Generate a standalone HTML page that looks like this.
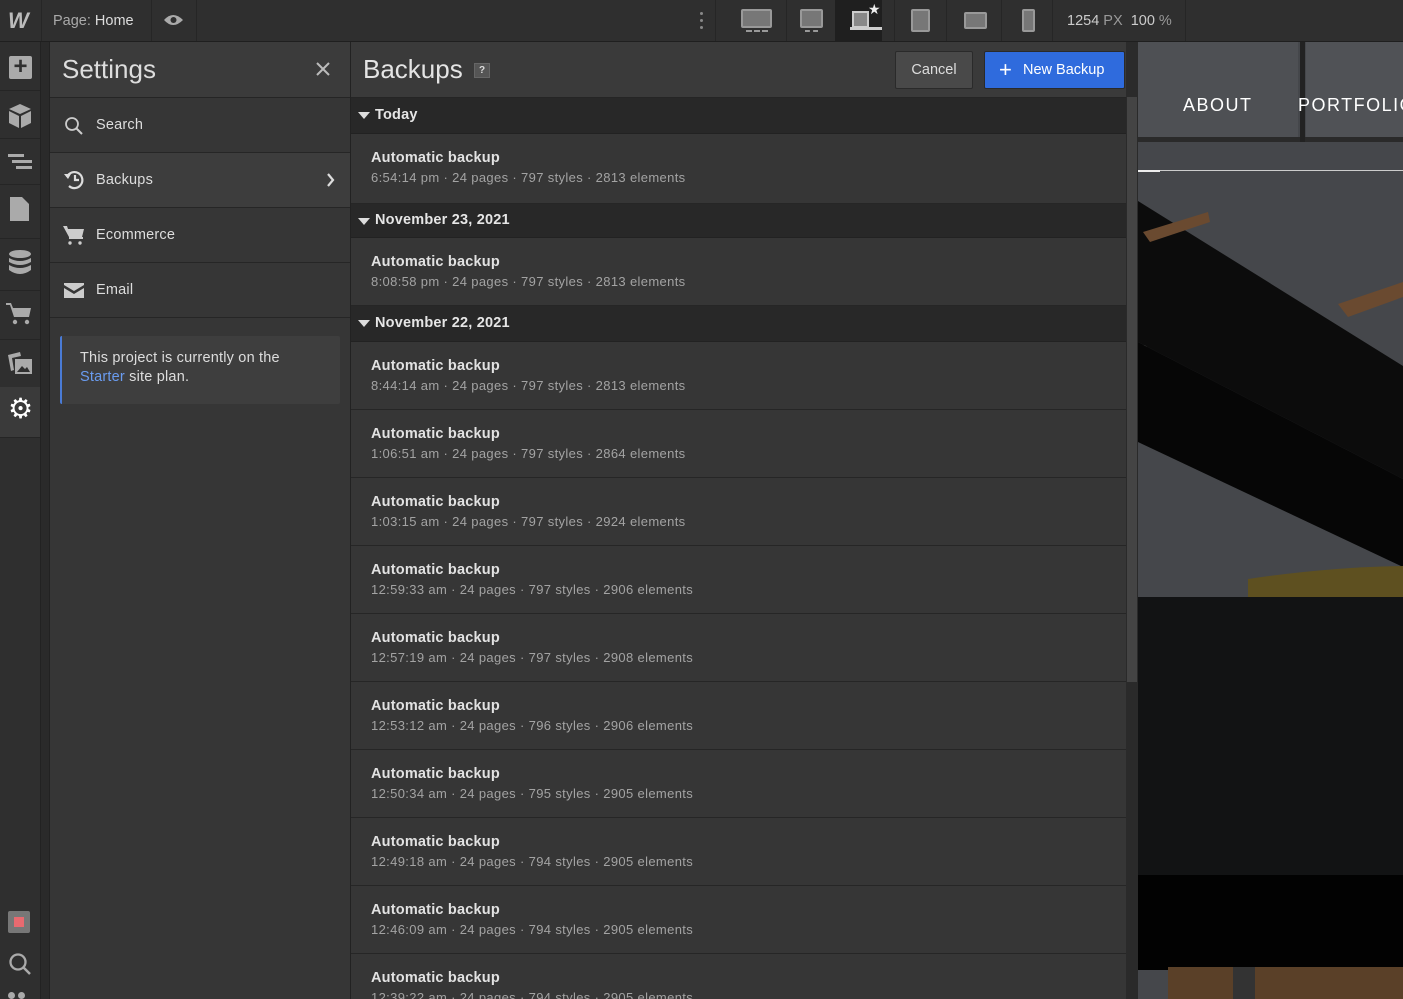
<!DOCTYPE html>
<html><head><style>
*{box-sizing:border-box;margin:0;padding:0}
html,body{width:1403px;height:999px;overflow:hidden}
body{background:#2b2b2b;font-family:"Liberation Sans",sans-serif;position:relative;color:#ddd}
.abs{position:absolute}
#top{left:0;top:0;width:1403px;height:42px;background:#2f2f2f;border-bottom:1px solid #1f1f1f}
.tsep{position:absolute;top:0;width:1px;height:41px;background:#262626}
#rail{left:0;top:42px;width:41px;height:957px;background:#2f2f2f;border-right:1px solid #222}
#gap{left:41px;top:42px;width:8px;height:957px;background:#2a2a2a}
#set{left:49px;top:42px;width:302px;height:957px;background:#363636;border-right:1px solid #222;border-left:1px solid #222}
.sh{height:56px;background:#3b3b3b;border-bottom:1px solid #252525;position:relative}
.mi{height:55px;border-bottom:1px solid #262626;position:relative;font-size:14.5px;color:#ddd;padding-left:46px;line-height:54px;letter-spacing:.2px}
#bk{left:351px;top:42px;width:775px;height:957px;background:#363636}
.gh{height:36px;background:#282828;border-bottom:1px solid #222;font-size:14.5px;font-weight:bold;color:#e6e6e6;line-height:35px;padding-left:24px;position:relative;letter-spacing:.2px}
.gh:before{content:"";position:absolute;left:7px;top:14px;border-left:6px solid transparent;border-right:6px solid transparent;border-top:7px solid #ddd}
.it{height:68px;border-bottom:1px solid #262626;padding:14px 0 0 20px}
.it b{display:block;font-size:14.5px;color:#e2e2e2;line-height:20px;letter-spacing:.2px}
.it span{display:block;font-size:13px;color:#a3a3a3;line-height:20px;letter-spacing:.35px}
#sb{left:1126px;top:97px;width:12px;height:902px;background:#2a2a2a}
#photo{left:1138px;top:42px;width:265px;height:957px;background:#4a4c50;overflow:hidden}
</style></head><body>
<div id="top" class="abs">
 <div class="abs" style="left:8px;top:8px;font-size:22px;font-weight:bold;font-style:italic;color:#bbb">W</div>
 <div class="tsep" style="left:41px"></div>
 <div class="abs" style="left:53px;top:13px;font-size:14.5px;color:#aaa">Page: <span style="color:#ddd">Home</span></div>
 <div class="tsep" style="left:151px"></div>
 <svg class="abs" style="left:163px;top:12px" width="21" height="16" viewBox="0 0 21 16"><path d="M1 8Q10 -2 20 8Q10 18 1 8Z" fill="#aaa"/><circle cx="10.5" cy="8" r="3" fill="#2f2f2f"/></svg>
 <div class="tsep" style="left:196px"></div>
 <div class="abs" style="left:700px;top:12px;width:4px;"><div style="width:3px;height:3px;background:#888;margin-bottom:4px;border-radius:2px"></div><div style="width:3px;height:3px;background:#888;margin-bottom:4px;border-radius:2px"></div><div style="width:3px;height:3px;background:#888;border-radius:2px"></div></div>
 <div class="tsep" style="left:715px"></div>
 <div class="abs" style="left:741px;top:9px;width:31px;height:19px;border:2px solid #999;background:#777;border-radius:2px"></div>
 <div class="abs" style="left:746px;top:30px;width:22px;height:2px;border-top:2px dashed #999"></div>
 <div class="tsep" style="left:786px"></div>
 <div class="abs" style="left:800px;top:9px;width:23px;height:19px;border:2px solid #999;background:#777;border-radius:2px"></div><div class="abs" style="left:805px;top:30px;width:13px;height:2px;border-top:2px dashed #999"></div>
 <div class="abs" style="left:835px;top:0;width:47px;height:41px;background:#1f1f1f"></div>
 <div class="abs" style="left:852px;top:11px;width:17px;height:17px;border:2px solid #ccc;background:#888"></div><div class="abs" style="left:850px;top:27px;width:32px;height:3px;background:#ccc"></div>
 <div class="abs" style="left:868px;top:1px;font-size:14px;color:#eee">★</div>
 <div class="tsep" style="left:894px"></div>
 <div class="abs" style="left:911px;top:9px;width:19px;height:23px;border:2px solid #999;background:#777;border-radius:2px"></div>
 <div class="tsep" style="left:946px"></div>
 <div class="abs" style="left:964px;top:12px;width:23px;height:17px;border:2px solid #999;background:#777;border-radius:2px"></div>
 <div class="tsep" style="left:1001px"></div>
 <div class="abs" style="left:1022px;top:9px;width:13px;height:23px;border:2px solid #999;background:#777;border-radius:2px"></div>
 <div class="tsep" style="left:1052px"></div>
 <div class="abs" style="left:1067px;top:13px;font-size:14.5px;color:#ccc">1254 <span style="color:#999">PX</span>&nbsp; 100 <span style="color:#999">%</span></div>
 <div class="tsep" style="left:1185px"></div>
</div>
<div id="rail" class="abs">
 <div class="abs" style="left:9px;top:14px;width:23px;height:23px;background:#aaa;color:#2f2f2f;font-size:24px;line-height:22px;text-align:center;font-weight:bold;border-radius:2px">+</div>
 <div class="abs" style="left:0;top:48px;width:40px;height:1px;background:#252525"></div>
 <svg class="abs" style="left:8px;top:61px" width="24" height="26" viewBox="0 0 24 26"><path d="M12 1L23 6L12 11L1 6Z" fill="#aaa"/><path d="M1 8L11 13V25L1 20Z M13 13L23 8V20L13 25Z" fill="#aaa"/></svg>
 <div class="abs" style="left:0;top:96px;width:40px;height:1px;background:#252525"></div>
 <div class="abs" style="left:8px;top:112px;width:16px;height:3px;background:#aaa"></div><div class="abs" style="left:12px;top:118px;width:20px;height:3px;background:#aaa"></div><div class="abs" style="left:16px;top:124px;width:16px;height:3px;background:#aaa"></div>
 <div class="abs" style="left:0;top:142px;width:40px;height:1px;background:#252525"></div>
 <svg class="abs" style="left:10px;top:155px" width="19" height="24" viewBox="0 0 19 24"><path d="M0 0H12L19 7V24H0Z" fill="#aaa"/></svg>
 <div class="abs" style="left:0;top:196px;width:40px;height:1px;background:#252525"></div>
 <svg class="abs" style="left:8px;top:208px" width="24" height="26" viewBox="0 0 24 26"><ellipse cx="12" cy="4" rx="11" ry="4" fill="#aaa"/><path d="M1 8Q12 14 23 8V12Q12 18 1 12Z M1 15Q12 21 23 15V20Q12 28 1 20Z" fill="#aaa"/></svg>
 <div class="abs" style="left:0;top:248px;width:40px;height:1px;background:#252525"></div>
 <svg class="abs" style="left:6px;top:260px" width="26" height="24" viewBox="0 0 26 24"><path d="M0 1H5L7 6H25L23 15H8L4 3H0Z" fill="#aaa"/><circle cx="9" cy="20" r="2.2" fill="#aaa"/><circle cx="21" cy="20" r="2.2" fill="#aaa"/></svg>
 <div class="abs" style="left:0;top:297px;width:40px;height:1px;background:#252525"></div>
 <svg class="abs" style="left:7px;top:309px" width="26" height="24" viewBox="0 0 26 24"><path d="M1 4L13 1L14 5L5 7L7 19L4 20Z" fill="#aaa"/><rect x="8" y="8" width="17" height="15" fill="#aaa"/><path d="M10 21L15 15L18 18L20 16L23 21Z" fill="#2f2f2f"/></svg>
 <div class="abs" style="left:0;top:345px;width:40px;height:50px;background:#3a3a3a"></div>
 <div class="abs" style="left:8px;top:352px;font-size:28px;color:#fff;line-height:30px">⚙</div>
 <div class="abs" style="left:0;top:395px;width:40px;height:1px;background:#252525"></div>
 <div class="abs" style="left:8px;top:869px;width:22px;height:22px;background:#777;border-radius:2px"></div><div class="abs" style="left:14px;top:875px;width:10px;height:10px;background:#e86a70"></div>
 <svg class="abs" style="left:8px;top:910px" width="24" height="24" viewBox="0 0 24 24"><circle cx="10" cy="10" r="7.5" fill="none" stroke="#aaa" stroke-width="2.3"/><path d="M15.5 15.5L22 22" stroke="#aaa" stroke-width="2.5"/></svg>
 <div class="abs" style="left:8px;top:950px;width:7px;height:7px;background:#aaa;border-radius:4px"></div><div class="abs" style="left:18px;top:950px;width:7px;height:7px;background:#aaa;border-radius:4px"></div>
</div>
<div id="gap" class="abs"></div>
<div id="set" class="abs">
 <div class="sh"><div class="abs" style="left:12px;top:12px;font-size:26px;color:#ddd">Settings</div><svg class="abs" style="left:266px;top:20px" width="14" height="14" viewBox="0 0 14 14"><path d="M1 1L13 13M13 1L1 13" stroke="#bbb" stroke-width="2"/></svg></div>
 <div class="mi"><svg class="abs" style="left:14px;top:18px" width="20" height="20" viewBox="0 0 20 20"><circle cx="8" cy="8" r="6" fill="none" stroke="#ccc" stroke-width="1.8"/><path d="M12.5 12.5L18 18" stroke="#ccc" stroke-width="2"/></svg>Search</div>
 <div class="mi" style="background:#3d3d3d"><svg class="abs" style="left:13px;top:16px" width="22" height="22" viewBox="0 0 22 22"><path d="M4 8A8 8 0 1 1 6 17" fill="none" stroke="#ddd" stroke-width="2.2"/><path d="M1 5L5 10L8 5Z" fill="#ddd"/><path d="M12 6V11H16" fill="none" stroke="#ddd" stroke-width="2.2"/></svg>Backups<svg class="abs" style="left:276px;top:20px" width="9" height="14" viewBox="0 0 9 14"><path d="M2 1L7 7L2 13" fill="none" stroke="#ddd" stroke-width="2.2"/></svg></div>
 <div class="mi"><svg class="abs" style="left:13px;top:17px" width="22" height="22" viewBox="0 0 22 22"><path d="M0 1H4L5 4H21L19 12H6Z" fill="#ccc"/><rect x="6" y="12" width="14" height="2" fill="#ccc"/><circle cx="7" cy="18" r="1.7" fill="#ccc"/><circle cx="17" cy="18" r="1.7" fill="#ccc"/></svg>Ecommerce</div>
 <div class="mi"><svg class="abs" style="left:14px;top:20px" width="20" height="15" viewBox="0 0 20 15"><path d="M0 0H20V2L10 8L0 2Z M0 5L10 11L20 5V15H0Z" fill="#ccc"/></svg>Email</div>
 <div class="abs" style="left:10px;top:294px;width:280px;height:68px;background:#3e3e3e;border-left:2px solid #4a7bd6;border-radius:2px;padding:13px 40px 13px 18px;font-size:14.5px;line-height:19px;color:#ddd;letter-spacing:.2px">This project is currently on the <span style="color:#6a9cf0">Starter</span> site plan.</div>
</div>
<div id="bk" class="abs">
 <div class="sh" style="background:#3a3a3a"><div class="abs" style="left:12px;top:12px;font-size:26px;color:#e4e4e4">Backups</div><div class="abs" style="left:123px;top:21px;width:16px;height:15px;background:#555;border:1px solid #666;font-size:10px;font-weight:bold;color:#ddd;text-align:center;line-height:13px">?</div>
 <div class="abs" style="left:544px;top:9px;width:78px;height:38px;background:#494949;border:1px solid #2a2a2a;border-radius:2px;font-size:14.5px;color:#ddd;text-align:center;line-height:36px">Cancel</div>
 <div class="abs" style="left:633px;top:9px;width:141px;height:38px;background:#2f6bdd;border:1px solid #2a2a2a;border-radius:2px;font-size:14.5px;color:#fff;line-height:36px;padding-left:38px">New Backup<span class="abs" style="left:14px;top:0;font-size:22px">+</span></div></div>
 <div class="gh">Today</div>
 <div class="it" style="height:70px"><b>Automatic backup</b><span>6:54:14 pm · 24 pages · 797 styles · 2813 elements</span></div>
 <div class="gh" style="height:34px;line-height:33px">November 23, 2021</div>
 <div class="it"><b>Automatic backup</b><span>8:08:58 pm · 24 pages · 797 styles · 2813 elements</span></div>
 <div class="gh">November 22, 2021</div>
 <div class="it"><b>Automatic backup</b><span>8:44:14 am · 24 pages · 797 styles · 2813 elements</span></div>
 <div class="it"><b>Automatic backup</b><span>1:06:51 am · 24 pages · 797 styles · 2864 elements</span></div>
 <div class="it"><b>Automatic backup</b><span>1:03:15 am · 24 pages · 797 styles · 2924 elements</span></div>
 <div class="it"><b>Automatic backup</b><span>12:59:33 am · 24 pages · 797 styles · 2906 elements</span></div>
 <div class="it"><b>Automatic backup</b><span>12:57:19 am · 24 pages · 797 styles · 2908 elements</span></div>
 <div class="it"><b>Automatic backup</b><span>12:53:12 am · 24 pages · 796 styles · 2906 elements</span></div>
 <div class="it"><b>Automatic backup</b><span>12:50:34 am · 24 pages · 795 styles · 2905 elements</span></div>
 <div class="it"><b>Automatic backup</b><span>12:49:18 am · 24 pages · 794 styles · 2905 elements</span></div>
 <div class="it"><b>Automatic backup</b><span>12:46:09 am · 24 pages · 794 styles · 2905 elements</span></div>
 <div class="it"><b>Automatic backup</b><span>12:39:22 am · 24 pages · 794 styles · 2905 elements</span></div>
</div>
<div id="sb" class="abs"><div style="margin-left:1px;width:10px;height:585px;background:#444"></div></div>
<div id="photo" class="abs">
 <svg class="abs" style="left:0;top:0" width="265" height="957" viewBox="0 0 265 957">
  <rect width="265" height="957" fill="#45474b"/>
  <rect x="0" y="0" width="160" height="95" fill="#4e5054"/>
  <rect x="168" y="0" width="97" height="95" fill="#505256"/>
  <rect x="0" y="95" width="265" height="5" fill="#2a2a2a"/>
  <rect x="162" y="0" width="5" height="100" fill="#222"/>
  <rect x="0" y="128" width="265" height="1" fill="#ccc"/>
  <rect x="0" y="128" width="22" height="2" fill="#eee"/>
  <rect x="0" y="303" width="11" height="1.5" fill="#ddd"/>
  <path d="M0 159L265 324V437L0 300Z" fill="#0c0c0c"/>
  <path d="M0 300L265 437V525L0 400Z" fill="#060606"/>
  <path d="M5 190L70 170L72 180L12 200Z" fill="#6a4a30"/>
  <path d="M200 262L265 240L265 255L210 275Z" fill="#6a4a30"/>
  <path d="M110 537Q190 525 265 524V555H110Z" fill="#5e5020"/>
  <rect y="555" width="265" height="280" fill="#121314"/>
  <rect y="833" width="265" height="95" fill="#020202"/>
  <rect x="30" y="925" width="235" height="32" fill="#5a4028"/>
  <rect x="95" y="925" width="22" height="32" fill="#333"/>
 </svg>
 <div class="abs" style="left:45px;top:53px;font-size:18px;letter-spacing:1.5px;color:#fff">ABOUT</div>
 <div class="abs" style="left:160px;top:53px;font-size:18px;letter-spacing:1.5px;color:#fff;white-space:nowrap">PORTFOLIO</div>
</div>
</body></html>
